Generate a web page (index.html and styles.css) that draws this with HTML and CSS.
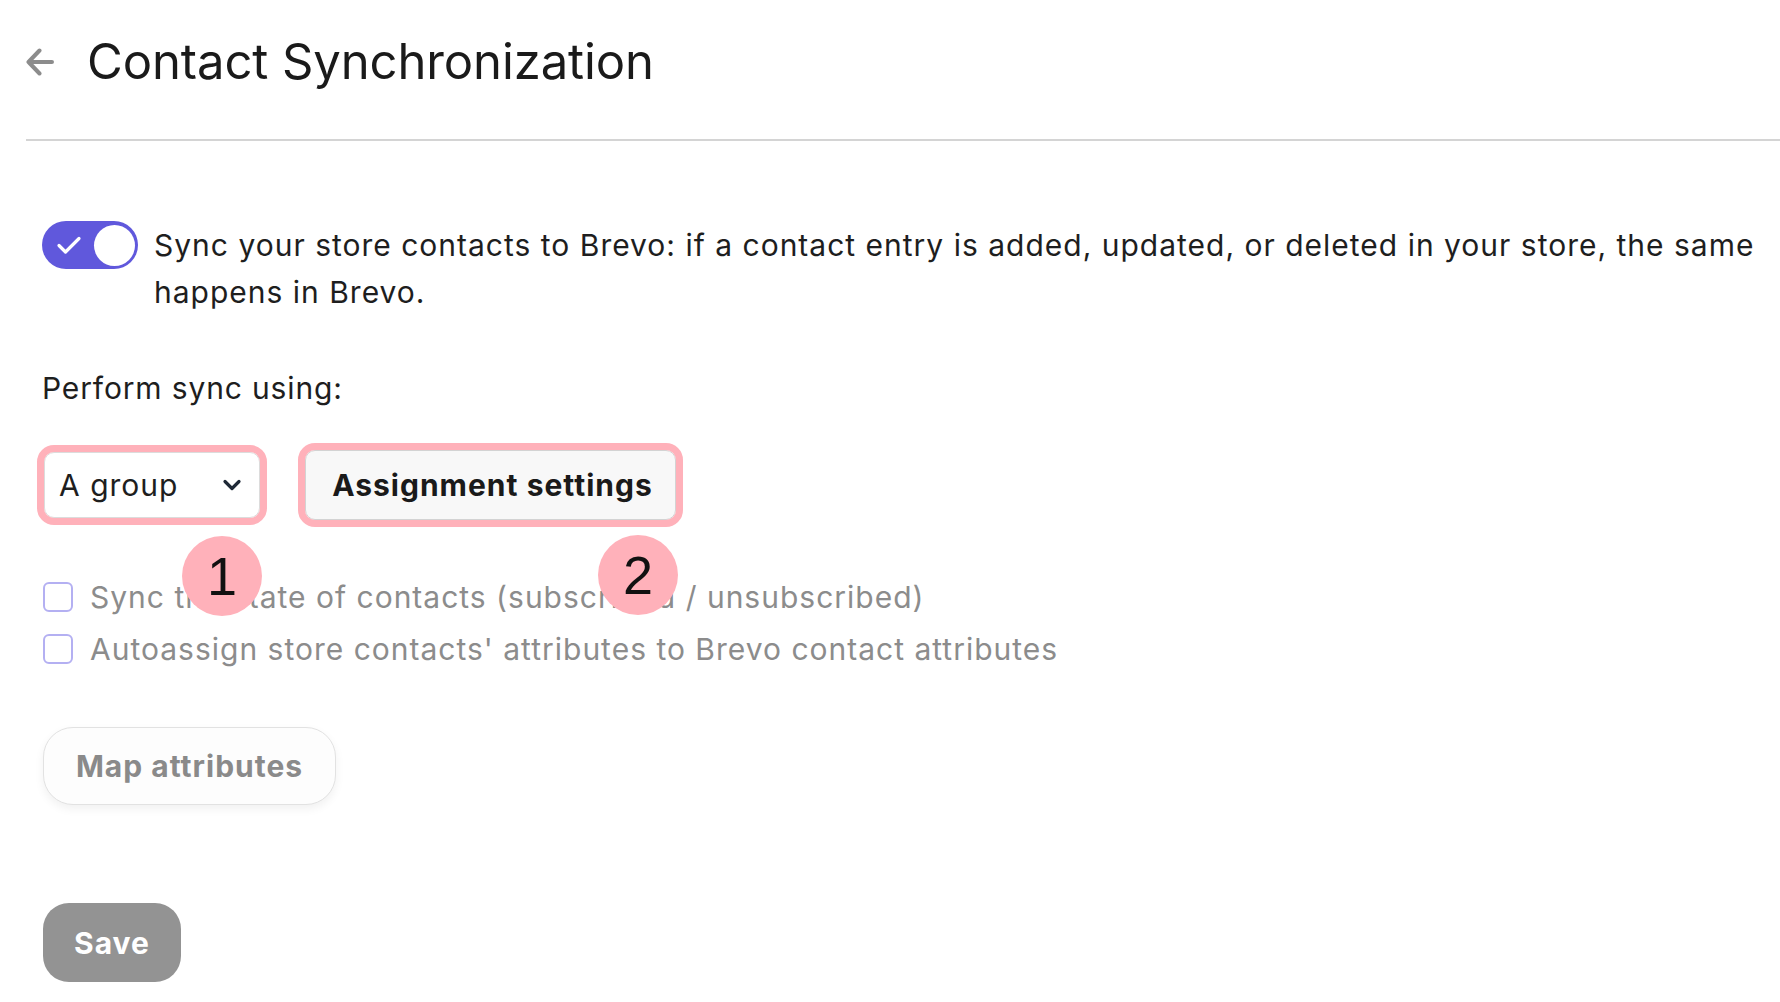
FILE: index.html
```html
<!DOCTYPE html>
<html lang="en">
<head>
<meta charset="utf-8">
<title>Contact Synchronization</title>
<link rel="stylesheet" href="styles.css">
</head>
<body>
<header class="header">
  <button class="back" aria-label="Back">
    <svg width="28" height="28" viewBox="0 0 28 28" fill="none" stroke="#8c8c8c" stroke-width="4" stroke-linecap="round" stroke-linejoin="round"><path d="M26 14H2.5M13.5 2.5L2.5 14L13.5 25.5"/></svg>
  </button>
  <h1 class="title">Contact Synchronization</h1>
</header>
<main class="content">
  <div class="sync-row">
    <span class="toggle">
      <svg class="toggle-check" width="26" height="20" viewBox="0 0 26 20" fill="none" stroke="#fff" stroke-width="3.2" stroke-linecap="round" stroke-linejoin="round"><path d="M3 10.5L9.5 17L23 3.5"/></svg>
      <span class="knob"></span>
    </span>
    <p class="sync-text">Sync your store contacts to Brevo: if a contact entry is added, updated, or deleted in your store, the same happens in Brevo.</p>
  </div>
  <p class="label">Perform sync using:</p>
  <div class="controls">
    <div class="select">
      <span>A group</span>
      <svg width="20" height="12" viewBox="0 0 20 12" fill="none" stroke="#1f2937" stroke-width="3.2" stroke-linecap="round" stroke-linejoin="round"><path d="M3 2.5L10 9.5L17 2.5"/></svg>
    </div>
    <button class="assign">Assignment settings</button>
    <span class="badge badge-1">1</span>
    <span class="badge badge-2">2</span>
  </div>
  <ul class="checks">
    <li><span class="box"></span>Sync the state of contacts (subscribed / unsubscribed)</li>
    <li><span class="box"></span>Autoassign store contacts' attributes to Brevo contact attributes</li>
  </ul>
  <button class="map">Map attributes</button>
  <button class="save">Save</button>
</main>
</body>
</html>
```
FILE: styles.css
```css
* { box-sizing: border-box; }
html, body { margin: 0; background: #fff; }
body {
  font-family: Inter, "Noto Sans", "Liberation Sans", sans-serif;
  color: #1e1e1e;
  width: 1780px;
  height: 1002px;
  overflow: hidden;
}
.header {
  margin-left: 26px;
  height: 141px;
  padding-bottom: 16px;
  border-bottom: 2px solid #d4d4d4;
  display: flex;
  align-items: center;
  gap: 33px;
}
.back {
  border: 0;
  background: none;
  padding: 0;
  width: 28px;
  height: 28px;
  display: flex;
}
.title {
  margin: 0;
  font-size: 49px;
  font-weight: 400;
  letter-spacing: -0.1px;
  color: #1a1a1a;
  line-height: 60px;
}
.content {
  padding: 0 20px 0 42px;
  display: flex;
  flex-direction: column;
  align-items: flex-start;
  letter-spacing: 1px;
}
.sync-row {
  margin-top: 79px;
  display: flex;
  align-items: flex-start;
  gap: 16px;
}
.toggle {
  flex: none;
  margin-top: 1px;
  width: 96px;
  height: 48px;
  border-radius: 24px;
  background: #6058dc;
  position: relative;
  display: flex;
  align-items: center;
  padding: 0 3.5px 0 14px;
  justify-content: space-between;
}
.toggle-check { display: block; }
.knob {
  width: 41px;
  height: 41px;
  border-radius: 50%;
  background: #fff;
}
.sync-text {
  margin: 2px 0 0;
  font-size: 30px;
  line-height: 47px;
}
.label {
  margin: 48px 0 0;
  font-size: 30px;
  line-height: 48px;
  letter-spacing: 0.85px;
}
.controls {
  position: relative;
  margin-top: 38px;
  display: flex;
  align-items: center;
  gap: 45px;
  padding-left: 2px;
}
.select {
  width: 216px;
  height: 66px;
  border: 1px solid #dcdcdc;
  border-radius: 10px;
  background: #fff;
  outline: 7px solid #ffb1ba;
  display: flex;
  align-items: center;
  justify-content: space-between;
  padding: 0 17px 0 14px;
  font-size: 30px;
}
.assign {
  height: 70px;
  width: 371px;
  border: 1px solid #d3d3d3;
  border-radius: 10px;
  background: #f8f8f8;
  outline: 7px solid #ffb1ba;
  font-family: inherit;
  font-size: 30px;
  font-weight: 700;
  letter-spacing: 1px;
  color: #1a1a1a;
  padding: 0 0 0 4px;
}
.badge {
  position: absolute;
  width: 80px;
  height: 80px;
  border-radius: 50%;
  background: #ffb1ba;
  color: #111;
  font-family: "Liberation Sans", Arial, sans-serif;
  font-size: 54px;
  letter-spacing: 0;
  display: flex;
  align-items: center;
  justify-content: center;
  line-height: 1;
}
.badge-1 { left: 140px; top: 86px; }
.badge-2 { left: 556px; top: 85px; }
.checks {
  list-style: none;
  margin: 51px 0 0;
  padding: 0;
  font-size: 30px;
  line-height: 52px;
  color: #8c8c8c;
}
.checks li {
  display: flex;
  align-items: center;
  gap: 17px;
}
.box {
  margin-left: 1px;
  width: 30px;
  height: 30px;
  border: 2px solid #b4b0f2;
  border-radius: 6px;
  background: #fff;
}
.map {
  margin-top: 52px;
  margin-left: 1px;
  width: 293px;
  height: 78px;
  border: 1.5px solid #e2e2e2;
  border-radius: 30px;
  background: #fdfdfd;
  box-shadow: 0 4px 10px rgba(0,0,0,0.06);
  font-family: inherit;
  font-size: 30px;
  font-weight: 700;
  letter-spacing: 1px;
  color: #8a8a8a;
  padding: 0;
}
.save {
  margin-top: 98px;
  margin-left: 1px;
  width: 138px;
  height: 79px;
  border: 0;
  border-radius: 26px;
  background: #939393;
  font-family: inherit;
  font-size: 30px;
  font-weight: 700;
  letter-spacing: 1px;
  color: #fff;
  padding: 0;
}
```
